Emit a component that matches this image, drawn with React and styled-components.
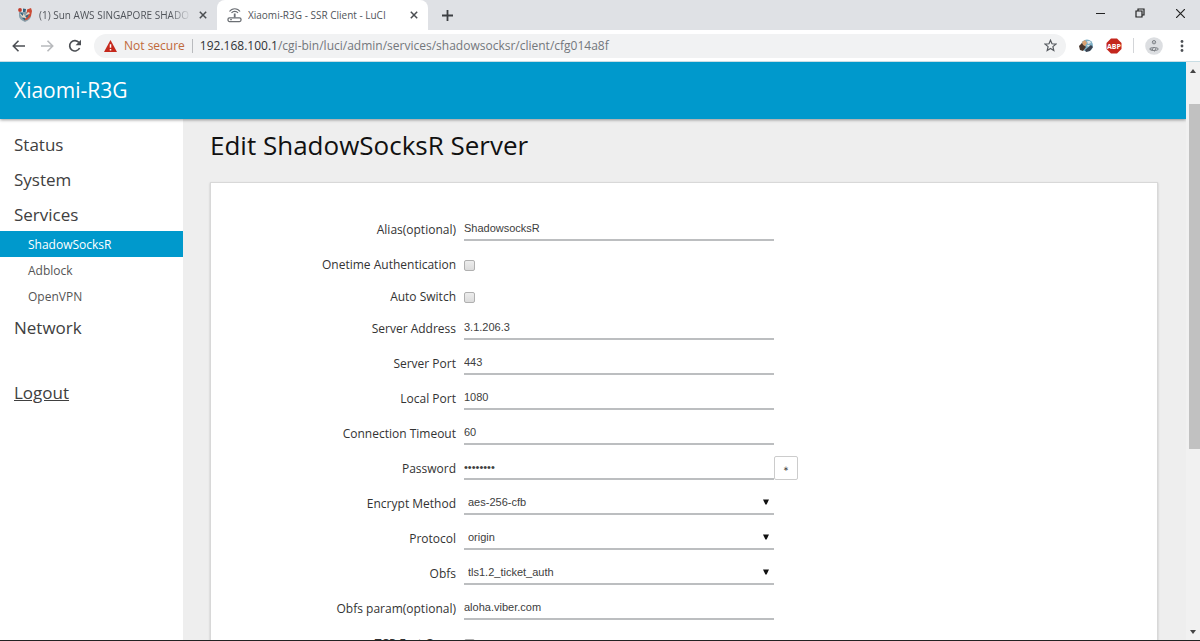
import React, { Fragment } from 'react';
import styled, { createGlobalStyle } from 'styled-components';

const blue = '#0099cc';

const GlobalStyle = createGlobalStyle`
    * {
        box-sizing: border-box;
    }

    body {
        margin: 0;
        font-family: 'Open Sans', 'Noto Sans', sans-serif;
        color: #404040;
    }

    button, input, select {
        margin: 0;
        padding: 0;
        border: 0;
        border-radius: 0;
        background: none;
        font: inherit;
        color: inherit;
    }

    svg {
        display: block;
        flex: none;
    }
`;

const Window = styled.div`
    display: flex;
    flex-direction: column;
    height: 100vh;
    overflow: hidden;
    background: #fff;
    border-bottom: 1px solid #222;
`;

/* browser chrome */

const TabStrip = styled.div`
    display: flex;
    flex: none;
    height: 30px;
    background: #dfe1e5;
`;

const Tab = styled.div`
    display: flex;
    align-items: center;
    gap: 6px;
    width: ${props => (props.$active ? 211 : 217)}px;
    padding: 0 8px 0 ${props => (props.$active ? 10 : 17)}px;
    border-radius: 8px 8px 0 0;
    background: ${props => (props.$active ? '#fff' : 'transparent')};
    font-size: 10px;
    color: #50545a;
`;

const TabTitle = styled.span`
    flex: 1;
    overflow: hidden;
    white-space: nowrap;
    ${props => props.$fade && 'mask-image: linear-gradient(to right, #000 86%, transparent);'}
`;

const IconButton = styled.button`
    display: flex;
    align-items: center;
    justify-content: center;
    width: ${props => props.$width || 12}px;
    height: ${props => props.$height || 16}px;
    flex: none;
`;

const WindowControls = styled.div`
    display: flex;
    margin-left: auto;
`;

const Toolbar = styled.div`
    display: flex;
    flex: none;
    align-items: center;
    height: 32px;
    padding: 0 4px 0 5px;
    background: #fff;
    border-bottom: 1px solid #c8dde4;
`;

const AddressBar = styled.div`
    display: flex;
    flex: 1;
    align-items: center;
    height: 24px;
    margin: 0 6px 0 5px;
    padding: 0 6px 0 10px;
    border-radius: 12px;
    background: #f1f2f3;
    font-size: 12px;
`;

const NotSecure = styled.span`
    margin-left: 7px;
    padding-right: 7px;
    border-right: 1px solid #b9bbbe;
    line-height: 14px;
    color: #c0693a;
    white-space: nowrap;
`;

const Url = styled.span`
    flex: 1;
    margin-left: 7px;
    color: #73777c;
    white-space: nowrap;

    b {
        font-weight: 400;
        color: #303236;
    }
`;

const Separator = styled.span`
    width: 1px;
    height: 15px;
    margin: 0 6px 0 5px;
    background: #d3d5d8;
`;

/* page */

const Viewport = styled.div`
    display: flex;
    flex: 1;
    min-height: 0;
`;

const Page = styled.div`
    display: flex;
    flex: 1;
    flex-direction: column;
    min-width: 0;
    overflow: hidden;
    background: #eee;
`;

const Header = styled.header`
    z-index: 1;
    flex: none;
    height: 57px;
    padding: 0 14px;
    background: ${blue};
    box-shadow: 0 1px 3px rgba(0, 0, 0, 0.4);
    color: #fff;
    font-size: 21px;
    line-height: 56px;
`;

const Columns = styled.div`
    display: flex;
    flex: 1;
    min-height: 0;
`;

const Sidebar = styled.nav`
    flex: none;
    width: 183px;
    padding-top: 7px;
    background: #fff;
`;

const MenuLink = styled.a`
    display: block;
    padding: 2px 0 0 14px;
    font-size: 17px;
    line-height: 33px;
    color: #404040;
    text-decoration: none;
`;

const SubLink = styled.a`
    display: block;
    padding: 2px 0 0 28px;
    font-size: 12px;
    line-height: 24px;
    color: ${props => (props.$active ? '#fff' : '#555')};
    background: ${props => (props.$active ? blue : 'transparent')};
    text-decoration: none;
`;

const LogoutLink = styled(MenuLink)`
    margin-top: 30px;
    text-decoration: underline;
`;

const Main = styled.main`
    flex: 1;
    min-width: 0;
    padding: 7px 28px 0 27px;
    overflow: hidden;
`;

const Title = styled.h2`
    margin: 0 0 17px;
    font-size: 26px;
    font-weight: 400;
    line-height: 39px;
    color: #111;
`;

const Card = styled.form`
    padding: 30px 0;
    border: 1px solid #d8d8d8;
    box-shadow: 0 1px 2px rgba(0, 0, 0, 0.2);
    background: #fff;
`;

const Row = styled.div`
    display: grid;
    grid-template-columns: 245px 310px auto;
    column-gap: 8px;
    height: ${props => (props.$check ? 32 : 35)}px;
    align-items: ${props => (props.$check ? 'center' : 'start')};
`;

const Label = styled.label`
    font-size: 12px;
    line-height: 34px;
    text-align: right;
    color: #333;
    white-space: nowrap;
`;

const TextInput = styled.input`
    width: 100%;
    height: 28px;
    padding-top: 3px;
    border-bottom: 2px solid #bcbec0;
    font-family: 'Liberation Sans', sans-serif;
    font-size: 11px;
    outline: 0;
`;

const SelectBox = styled.div`
    display: flex;
    align-items: center;
    height: 28px;
    padding-top: 3px;
    border-bottom: 2px solid #bcbec0;

    svg {
        margin-left: -11px;
        pointer-events: none;
    }
`;

const Select = styled.select`
    width: 100%;
    height: 23px;
    padding-left: 4px;
    appearance: none;
    font-family: 'Liberation Sans', sans-serif;
    font-size: 11px;
    outline: 0;
`;

const Checkbox = styled.input`
    width: 11px;
    height: 11px;
    appearance: none;
    border: 1px solid #b0b0b0;
    border-radius: 2px;
    background: linear-gradient(#ededed, #dcdcdc);
`;

const RevealButton = styled.button`
    width: 24px;
    height: 24px;
    margin: 4px 0 0 -8px;
    padding-top: 2px;
    border: 1px solid #ccc;
    border-radius: 2px;
    font-size: 7px;
    line-height: 20px;
`;

const Scrollbar = styled.div`
    display: flex;
    flex: none;
    flex-direction: column;
    align-items: center;
    width: 14px;
    padding: 7px 0 6px;
    background: #f1f1f1;
`;

const Thumb = styled.div`
    width: 11px;
    height: 61%;
    margin: 31px 0 auto 2px;
    background: #c1c1c1;
`;

const CloseIcon = () => (
    <svg width="8" height="8" viewBox="0 0 8 8" stroke="#4a4d51" strokeWidth="1.5">
        <path d="M0.8 0.8 7.2 7.2M7.2 0.8 0.8 7.2" />
    </svg>
);

const ShieldIcon = () => (
    <svg width="16" height="16" viewBox="0 0 16 16">
        <path d="M2 5h12v4c0 2.500-2.500 4.500-6 6C4.500 13.500 2 11.500 2 9z" fill="#8aa0ab" />
        <circle cx="3" cy="3" r="1.900" fill="#c33d2c" />
        <path d="M6 1.500l3 .5-.5 3L6 5z" fill="#35617c" />
        <path d="M10 2.500l4-1.500 1 3-1 5-3.500 3.500-3 1 2-4z" fill="#cb4b35" />
        <path d="M3 7l3-1 2 3 3-4 2 1-4 5-4-1z" fill="#e8d8c9" />
        <path d="M3 5.500l2.500 3.500 1-2.500zM8 9l2 2 2-4zM5 11l3 2.500V11z" fill="#31627d" />
    </svg>
);

const RouterIcon = () => (
    <svg width="15" height="15" viewBox="0 0 15 15" fill="none" stroke="#6b6f74">
        <path d="M2.500 3.500C5-.2 10.500-.2 13 3.500M4.500 5C6 2.800 9.500 2.800 11 5" strokeWidth="1.200" />
        <path d="M7.700 5.500v4" strokeWidth="1.800" />
        <rect x="1" y="9.800" width="13" height="3.800" rx="1.500" strokeWidth="1.300" />
        <path d="M3 11.700h2" />
    </svg>
);

const ArrowIcon = ({ color, flip }) => (
    <svg width="14" height="14" viewBox="0 0 14 14" fill="none" stroke={color} strokeWidth="1.600">
        <path d={flip ? 'M1 7h11.500M7.500 1.800 12.700 7l-5.200 5.200' : 'M13 7H1.500M6.500 1.800 1.300 7l5.200 5.200'} />
    </svg>
);

const ReloadIcon = () => (
    <svg width="14" height="14" viewBox="0 0 14 14">
        <path d="M11.600 9A5.200 5.200 0 1 1 11 3.600" fill="none" stroke="#4c4f54" strokeWidth="1.700" />
        <path d="M13 .8v5.400H7.600z" fill="#4c4f54" />
    </svg>
);

const WarningIcon = () => (
    <svg width="13" height="12" viewBox="0 0 13 12">
        <path d="M6.500 0 13 12H0z" fill="#c5281c" />
        <path d="M6.500 4.200v3.600M6.500 9v1.500" stroke="#fff" strokeWidth="1.500" />
    </svg>
);

const StarIcon = () => (
    <svg width="13" height="13" viewBox="0 0 13 13" fill="none" stroke="#55595e" strokeWidth="1.200">
        <path d="M6.500 1.200 8 4.800l3.900.3-3 2.500.9 3.800-3.300-2-3.300 2 .9-3.800-3-2.500L5 4.800z" />
    </svg>
);

const GlobeIcon = () => (
    <svg width="16" height="14" viewBox="0 0 16 14">
        <circle cx="9" cy="6.500" r="6" fill="#7fb0c6" />
        <path d="M1 7l3-3 4 4-3 4-3-1z" fill="#47352c" />
        <path d="M4 3l3-2 2 3-2 3-2-1z" fill="#d9a171" />
        <path d="M9 2l3 0 1 2-3 1zM9 6l3 0-2 2z" fill="#dfe6e8" />
        <path d="M7 11l6-5 2 2-3 4-4 1z" fill="#3a4250" />
    </svg>
);

const AbpIcon = () => (
    <svg width="16" height="16" viewBox="0 0 16 16">
        <path d="M5 .5h6L15.500 5v6L11 15.500H5L.5 11V5z" fill="#c4261d" />
        <text x="8" y="10.500" textAnchor="middle" fontSize="7" fontWeight="700" fill="#fff">ABP</text>
    </svg>
);

const AvatarIcon = () => (
    <svg width="18" height="18" viewBox="0 0 18 18" fill="none" stroke="#7d8186">
        <circle cx="9" cy="9" r="8.800" fill="#dcdee1" stroke="none" />
        <circle cx="9" cy="5.200" r="1.700" />
        <path d="M8.500 5.200h1" />
        <path d="M4.500 12c1-2 8-2 9 0-1 2-8 2-9 0zM8 11l-1 3M11 11l-1.500 3.500M6 11.500v1.500" />
    </svg>
);

const DotsIcon = () => (
    <svg width="4" height="14" viewBox="0 0 4 14" fill="#4c4f54">
        <circle cx="2" cy="2.500" r="1.400" />
        <circle cx="2" cy="7" r="1.400" />
        <circle cx="2" cy="11.500" r="1.400" />
    </svg>
);

const DownIcon = () => (
    <svg width="6" height="6" viewBox="0 0 6 6" fill="#111">
        <path d="M0 .5h6L3.600 5.500H2.400z" />
    </svg>
);

const ScrollArrow = ({ up }) => (
    <svg width="6" height="4" viewBox="0 0 6 4" fill="#444">
        <path d={up ? 'M0 4 3 0l3 4z' : 'M0 0h6L3 4z'} />
    </svg>
);

const fields = [
    { id: 'alias', label: 'Alias(optional)', value: 'ShadowsocksR' },
    { id: 'onetime', label: 'Onetime Authentication', type: 'checkbox' },
    { id: 'switch', label: 'Auto Switch', type: 'checkbox' },
    { id: 'server', label: 'Server Address', value: '3.1.206.3' },
    { id: 'server-port', label: 'Server Port', value: '443' },
    { id: 'local-port', label: 'Local Port', value: '1080' },
    { id: 'timeout', label: 'Connection Timeout', value: '60' },
    { id: 'password', label: 'Password', type: 'password', value: 'password' },
    { id: 'method', label: 'Encrypt Method', type: 'select', value: 'aes-256-cfb' },
    { id: 'protocol', label: 'Protocol', type: 'select', value: 'origin' },
    { id: 'obfs', label: 'Obfs', type: 'select', value: 'tls1.2_ticket_auth' },
    { id: 'obfs-param', label: 'Obfs param(optional)', value: 'aloha.viber.com' },
    { id: 'fast-open', label: 'TCP Fast Open', type: 'checkbox' },
];

const Control = ({ id, type, value }) => {
    if (type === 'checkbox') {
        return <Checkbox id={id} type="checkbox" />;
    }
    if (type === 'select') {
        return (
            <SelectBox>
                <Select id={id} defaultValue={value}>
                    <option>{value}</option>
                </Select>
                <DownIcon />
            </SelectBox>
        );
    }
    return <TextInput id={id} type={type || 'text'} defaultValue={value} />;
};

const Field = ({ id, label, type, value }) => (
    <Row $check={type === 'checkbox'}>
        <Label htmlFor={id}>{label}</Label>
        <Control id={id} type={type} value={value} />
        {type === 'password' && <RevealButton type="button" aria-label="Reveal password">∗</RevealButton>}
    </Row>
);

const Chrome = () => (
    <Fragment>
        <TabStrip>
            <Tab>
                <ShieldIcon />
                <TabTitle $fade>(1) Sun AWS SINGAPORE SHADO</TabTitle>
                <IconButton aria-label="Close tab"><CloseIcon /></IconButton>
            </Tab>
            <Tab $active>
                <RouterIcon />
                <TabTitle>Xiaomi-R3G - SSR Client - LuCI</TabTitle>
                <IconButton aria-label="Close tab"><CloseIcon /></IconButton>
            </Tab>
            <IconButton aria-label="New tab" $width={38} $height={30}>
                <svg width="11" height="11" viewBox="0 0 11 11" stroke="#3c3f43" strokeWidth="1.800">
                    <path d="M5.500 0v11M0 5.500h11" />
                </svg>
            </IconButton>
            <WindowControls>
                <IconButton aria-label="Minimize" $width={40} $height={26}>
                    <svg width="9" height="9" viewBox="0 0 9 9" stroke="#222"><path d="M0 4.500h9" /></svg>
                </IconButton>
                <IconButton aria-label="Restore" $width={40} $height={26}>
                    <svg width="10" height="10" viewBox="0 0 10 10" fill="none" stroke="#222" strokeWidth="1.200">
                        <path d="M1 3h6v6H1zM3 3V1h6v6H7" />
                    </svg>
                </IconButton>
                <IconButton aria-label="Close" $width={40} $height={26}>
                    <svg width="9" height="9" viewBox="0 0 9 9" stroke="#222" strokeWidth="1.200">
                        <path d="M0 0l9 9M9 0 0 9" />
                    </svg>
                </IconButton>
            </WindowControls>
        </TabStrip>
        <Toolbar>
            <IconButton aria-label="Back" $width={28}><ArrowIcon color="#4c4f54" /></IconButton>
            <IconButton aria-label="Forward" $width={28}><ArrowIcon color="#b8babd" flip /></IconButton>
            <IconButton aria-label="Reload" $width={28}><ReloadIcon /></IconButton>
            <AddressBar>
                <WarningIcon />
                <NotSecure>Not secure</NotSecure>
                <Url><b>192.168.100.1</b>/cgi-bin/luci/admin/services/shadowsocksr/client/cfg014a8f</Url>
                <IconButton aria-label="Bookmark" $width={20}><StarIcon /></IconButton>
            </AddressBar>
            <IconButton aria-label="Download manager" $width={28}><GlobeIcon /></IconButton>
            <IconButton aria-label="Adblock Plus" $width={28}><AbpIcon /></IconButton>
            <Separator />
            <IconButton aria-label="Profile" $width={28}><AvatarIcon /></IconButton>
            <IconButton aria-label="Menu" $width={28}><DotsIcon /></IconButton>
        </Toolbar>
    </Fragment>
);

const App = () => (
    <Window>
        <GlobalStyle />
        <Chrome />
        <Viewport>
            <Page>
                <Header>Xiaomi-R3G</Header>
                <Columns>
                    <Sidebar>
                        <MenuLink href="#status">Status</MenuLink>
                        <MenuLink href="#system">System</MenuLink>
                        <MenuLink href="#services">Services</MenuLink>
                        <SubLink href="#shadowsocksr" $active>ShadowSocksR</SubLink>
                        <SubLink href="#adblock">Adblock</SubLink>
                        <SubLink href="#openvpn">OpenVPN</SubLink>
                        <MenuLink href="#network">Network</MenuLink>
                        <LogoutLink href="#logout">Logout</LogoutLink>
                    </Sidebar>
                    <Main>
                        <Title>Edit ShadowSocksR Server</Title>
                        <Card>
                            {fields.map(field => <Field key={field.id} {...field} />)}
                        </Card>
                    </Main>
                </Columns>
            </Page>
            <Scrollbar>
                <ScrollArrow up />
                <Thumb />
                <ScrollArrow />
            </Scrollbar>
        </Viewport>
    </Window>
);

export default App;
